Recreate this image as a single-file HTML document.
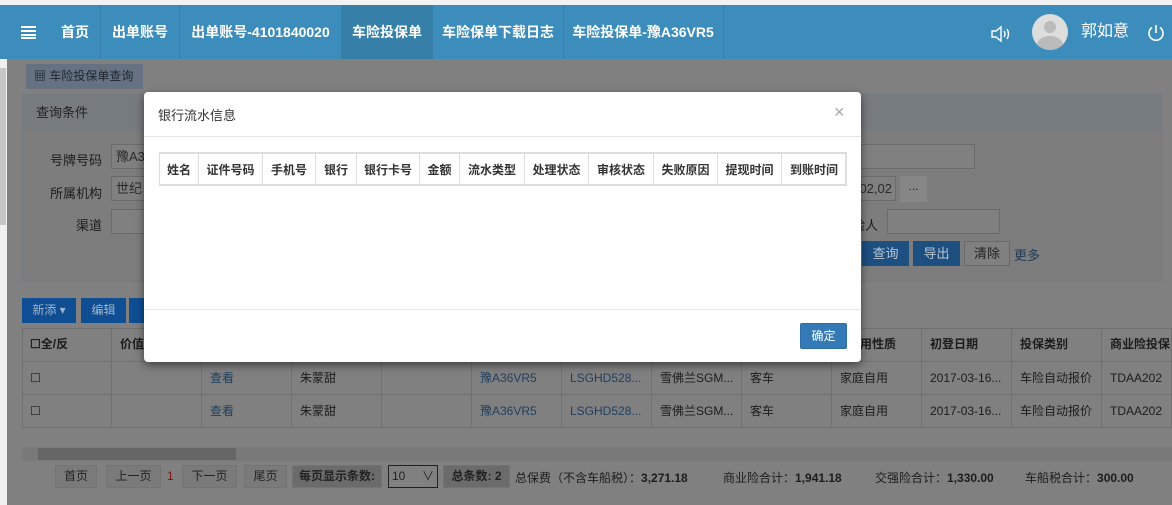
<!DOCTYPE html>
<html><head><meta charset="utf-8"><style>
*{box-sizing:border-box;margin:0;padding:0}
body{width:1172px;height:505px;overflow:hidden;background:#808080;font-family:"Liberation Sans","Noto Sans CJK SC",sans-serif;font-size:12px;color:#1c1c1c;position:relative}
.a{position:absolute}
.nav{left:0;top:5px;width:1172px;height:54px;background:#3c8dbc;color:#fff;font-weight:bold;font-size:14px}
.nav .t{position:absolute;top:0;height:54px;line-height:54px;text-align:center}
.sep{position:absolute;top:0;width:1px;height:54px;background:#367fa9}
.inp{position:absolute;border:1px solid #6b6b6b;background:#808080;height:25px;line-height:23px;padding-left:4px;color:#2a2a2a;font-size:13px}
.btn{position:absolute;height:25px;line-height:25px;text-align:center;color:#b9c6d4;background:#0f4e93}
.cell{position:absolute;border-right:1px solid #707070;height:33px;line-height:33px;padding-left:8px;white-space:nowrap;overflow:hidden}
.row{position:absolute;left:22px;width:1150px;height:33px;border-bottom:1px solid #707070}
.pg{position:absolute;top:465px;height:23px;line-height:21px;border:1px solid #747474;background:#7a7a7a;text-align:center;color:#222}
.th{position:absolute;top:0;height:32px;line-height:32px;border-right:1px solid #ddd;text-align:center;font-weight:bold;color:#333}
</style></head><body>
<div class="a" style="left:0;top:0;width:1172px;height:5px;background:#f2f2f2"></div>
<div class="a nav">
 <div class="a" style="left:21px;top:21px;width:15px;height:2px;background:#fff;box-shadow:0 4px 0 #fff,0 8px 0 #fff,0 11px 0 #fff"></div>
 <div class="t" style="left:50px;width:50px">首页</div>
 <div class="sep" style="left:100px"></div>
 <div class="t" style="left:101px;width:78px">出单账号</div>
 <div class="sep" style="left:179px"></div>
 <div class="t" style="left:180px;width:161px">出单账号-4101840020</div>
 <div class="t" style="left:341px;width:92px;background:#367fa9">车险投保单</div>
 <div class="t" style="left:433px;width:130px">车险保单下载日志</div>
 <div class="sep" style="left:563px"></div>
 <div class="t" style="left:563px;width:160px">车险投保单-豫A36VR5</div>
 <div class="sep" style="left:723px"></div>
 <svg class="a" style="left:990px;top:20px" width="22" height="18" viewBox="0 0 22 18" fill="none" stroke="#fff" stroke-width="1.4"><path d="M2 6h4l5-4v14l-5-4H2z"/><path d="M14 6q2 3 0 6M17 4q3 5 0 10"/></svg>
 <div class="a" style="left:1032px;top:9px;width:36px;height:36px;border-radius:50%;background:#ddd;overflow:hidden"><div class="a" style="left:12px;top:7px;width:12px;height:12px;border-radius:50%;background:#bbb"></div><div class="a" style="left:5px;top:22px;width:26px;height:18px;border-radius:50%;background:#bbb"></div></div>
 <div class="t" style="left:1080px;width:50px;font-weight:normal;font-size:16px">郭如意</div>
 <svg class="a" style="left:1146px;top:18px" width="20" height="20" viewBox="0 0 20 20" fill="none" stroke="#fff" stroke-width="1.6"><path d="M6 4.5A7 7 0 1 0 14 4.5"/><path d="M10 2v8"/></svg>
</div>
<div class="a" style="left:0;top:59px;width:7px;height:446px;background:#f0f0f0"></div>
<div class="a" style="left:0;top:68px;width:6px;height:157px;background:#c6c6c6"></div>
<div class="a" style="left:26px;top:64px;width:117px;height:25px;background:#667282;color:#1d2530;line-height:25px;padding-left:8px"><b>▦</b> 车险投保单查询</div>
<div class="a" style="left:22px;top:94px;width:1140px;height:188px;border:1px solid #747a80;background:#7d7d7d"></div>
<div class="a" style="left:23px;top:95px;width:1138px;height:35px;background:#767b80;line-height:35px;padding-left:13px;color:#222;font-size:13px">查询条件</div>
<div class="a" style="left:40px;top:150px;width:62px;text-align:right;font-size:13px">号牌号码</div>
<div class="a" style="left:40px;top:183px;width:62px;text-align:right;font-size:13px">所属机构</div>
<div class="a" style="left:40px;top:215px;width:62px;text-align:right;font-size:13px">渠道</div>
<div class="inp" style="left:111px;top:144px;width:40px">豫A3</div>
<div class="inp" style="left:111px;top:176px;width:40px">世纪</div>
<div class="inp" style="left:111px;top:209px;width:40px"></div>
<div class="inp" style="left:840px;top:144px;width:135px"></div>
<div class="inp" style="left:840px;top:176px;width:56px;text-align:right;padding-right:3px">02,02</div>
<div class="a" style="left:900px;top:176px;width:27px;height:26px;background:#868686;text-align:center;line-height:20px;color:#222">...</div>
<div class="a" style="left:852px;top:215px;font-size:13px">验人</div>
<div class="inp" style="left:887px;top:209px;width:113px"></div>
<div class="btn" style="left:862px;top:241px;width:47px;background:#1d4f80;font-size:13px">查询</div>
<div class="btn" style="left:913px;top:241px;width:47px;background:#1d4f80;font-size:13px">导出</div>
<div class="btn" style="left:964px;top:241px;width:46px;background:#808080;border:1px solid #6a6a6a;color:#222;line-height:23px;font-size:13px">清除</div>
<div class="a" style="left:1014px;top:245px;color:#223b58;font-size:13px">更多</div>
<div class="btn" style="left:22px;top:298px;width:54px;color:#9fb4cc">新添 ▾</div>
<div class="btn" style="left:81px;top:298px;width:45px;color:#9fb4cc">编辑</div>
<div class="btn" style="left:129px;top:298px;width:20px"></div>
<div class="a" style="left:22px;top:328px;width:1150px;height:101px;border-top:1px solid #707070;border-left:1px solid #707070"></div>
<div class="row" style="top:328px;height:34px;font-weight:bold">
 <div class="cell" style="left:0;width:90px;padding-left:8px">☐全/反</div>
 <div class="cell" style="left:90px;width:90px">价值</div>
 <div class="cell" style="left:810px;width:90px;padding-left:4px">车使用性质</div>
 <div class="cell" style="left:900px;width:90px">初登日期</div>
 <div class="cell" style="left:990px;width:90px">投保类别</div>
 <div class="cell" style="left:1080px;width:70px">商业险投保</div>
</div>
<div class="row" style="top:362px">
 <div class="cell" style="left:0;width:90px">☐</div><div class="cell" style="left:90px;width:90px"></div>
 <div class="cell" style="left:180px;width:90px;color:#1f3e5c">查看</div><div class="cell" style="left:270px;width:90px">朱蒙甜</div>
 <div class="cell" style="left:360px;width:90px"></div><div class="cell" style="left:450px;width:90px;color:#1f3e5c">豫A36VR5</div>
 <div class="cell" style="left:540px;width:90px;color:#1f3e5c">LSGHD528...</div><div class="cell" style="left:630px;width:90px">雪佛兰SGM...</div>
 <div class="cell" style="left:720px;width:90px">客车</div><div class="cell" style="left:810px;width:90px">家庭自用</div>
 <div class="cell" style="left:900px;width:90px">2017-03-16...</div><div class="cell" style="left:990px;width:90px">车险自动报价</div>
 <div class="cell" style="left:1080px;width:70px">TDAA202</div>
</div>
<div class="row" style="top:395px">
 <div class="cell" style="left:0;width:90px">☐</div><div class="cell" style="left:90px;width:90px"></div>
 <div class="cell" style="left:180px;width:90px;color:#1f3e5c">查看</div><div class="cell" style="left:270px;width:90px">朱蒙甜</div>
 <div class="cell" style="left:360px;width:90px"></div><div class="cell" style="left:450px;width:90px;color:#1f3e5c">豫A36VR5</div>
 <div class="cell" style="left:540px;width:90px;color:#1f3e5c">LSGHD528...</div><div class="cell" style="left:630px;width:90px">雪佛兰SGM...</div>
 <div class="cell" style="left:720px;width:90px">客车</div><div class="cell" style="left:810px;width:90px">家庭自用</div>
 <div class="cell" style="left:900px;width:90px">2017-03-16...</div><div class="cell" style="left:990px;width:90px">车险自动报价</div>
 <div class="cell" style="left:1080px;width:70px">TDAA202</div>
</div>
<div class="a" style="left:22px;top:447px;width:1150px;height:14px;background:#797979"></div>
<div class="a" style="left:38px;top:448px;width:198px;height:12px;background:#666"></div>
<div class="pg" style="left:55px;width:42px">首页</div>
<div class="pg" style="left:106px;width:55px">上一页</div>
<div class="a" style="left:167px;top:469px;color:#7a1010">1</div>
<div class="pg" style="left:182px;width:55px">下一页</div>
<div class="pg" style="left:244px;width:43px">尾页</div>
<div class="pg" style="left:292px;width:90px;background:#6b6b6b;font-weight:bold">每页显示条数:</div>
<div class="pg" style="left:388px;width:50px;border-color:#222;text-align:left;padding-left:3px;background:#808080">10 <span style="float:right;padding-right:3px">∨</span></div>
<div class="pg" style="left:443px;width:67px;background:#6b6b6b;font-weight:bold">总条数: 2</div>
<div class="a" style="left:515px;top:469px;white-space:nowrap">总保费（不含车船税）：<b>3,271.18</b></div>
<div class="a" style="left:723px;top:469px;white-space:nowrap">商业险合计：<b>1,941.18</b></div>
<div class="a" style="left:875px;top:469px;white-space:nowrap">交强险合计：<b>1,330.00</b></div>
<div class="a" style="left:1025px;top:469px;white-space:nowrap">车船税合计：<b>300.00</b></div>
<!-- modal -->
<div class="a" style="left:144px;top:92px;width:717px;height:270px;background:#fff;border-radius:4px;box-shadow:0 3px 9px rgba(0,0,0,.5)">
 <div class="a" style="left:14px;top:13px;color:#333;font-size:13px">银行流水信息</div>
 <div class="a" style="left:690px;top:10px;color:#aaa;font-size:18px">×</div>
 <div class="a" style="left:0;top:44px;width:717px;height:1px;background:#e5e5e5"></div>
 <div class="a" style="left:15px;top:60px;width:688px;height:34px;border:2px solid #ddd;border-left:1px solid #ddd">
  <div class="th" style="left:0;width:39px">姓名</div>
  <div class="th" style="left:39px;width:64px">证件号码</div>
  <div class="th" style="left:103px;width:53px">手机号</div>
  <div class="th" style="left:156px;width:41px">银行</div>
  <div class="th" style="left:197px;width:63px">银行卡号</div>
  <div class="th" style="left:260px;width:40px">金额</div>
  <div class="th" style="left:300px;width:65px">流水类型</div>
  <div class="th" style="left:365px;width:64px">处理状态</div>
  <div class="th" style="left:429px;width:65px">审核状态</div>
  <div class="th" style="left:494px;width:64px">失败原因</div>
  <div class="th" style="left:558px;width:64px">提现时间</div>
  <div class="th" style="left:622px;width:64px;border-right:none">到账时间</div>
 </div>
 <div class="a" style="left:0;top:217px;width:717px;height:1px;background:#e5e5e5"></div>
 <div class="a" style="left:656px;top:231px;width:47px;height:26px;background:#337ab7;border:1px solid #2e6da4;border-radius:2px;color:#fff;text-align:center;line-height:24px">确定</div>
</div>
</body></html>
